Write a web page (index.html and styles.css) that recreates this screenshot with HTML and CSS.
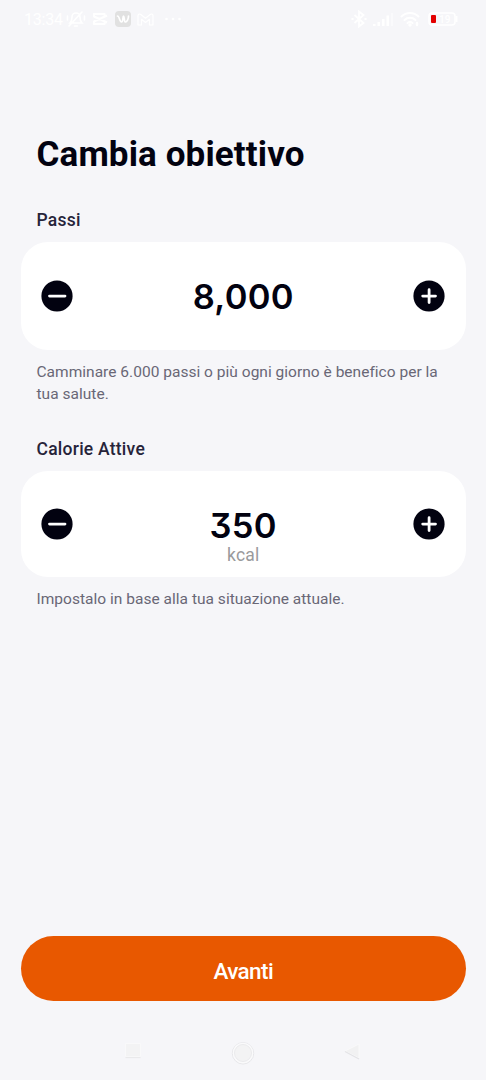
FILE: index.html
```html
<!DOCTYPE html>
<html lang="it">
<head>
<meta charset="utf-8">
<title>Cambia obiettivo</title>
<link rel="stylesheet" href="styles.css">
</head>
<body>
<div class="screen">
  <header class="status">
    <div class="status-left">
      <span class="clock">13:34</span>
      <svg class="bell" width="20" height="18" viewBox="0 0 20 18" fill="none" stroke="#fff" stroke-width="1.600" stroke-linecap="round"><path d="M4 13h12c-1.500-1.500-2-3-2-6a4 4 0 0 0-8 0c0 3-.5 4.500-2 6zM8.500 16h3M3 16 16 2M1.500 6v4M18.500 6v4"/></svg>
      <svg class="cut" width="16" height="14" viewBox="0 0 16 14" fill="none" stroke="#fff" stroke-width="2.200" stroke-linejoin="round"><path d="M15 3.500 2 9.500V12h10.500v-1.500M15 10.500 2 4.500V2h10.500v1.500"/></svg>
      <svg class="w-app" width="16" height="16" viewBox="0 0 16 16"><rect width="16" height="16" rx="4" fill="#e1e1e1"/><path d="M2.500 5c2 0 2 6 4 6s1-6 2-6 .5 6 2 6 3-3 3-6" fill="none" stroke="#fff" stroke-width="1.700" stroke-linecap="round"/></svg>
      <svg class="mail" width="17" height="13" viewBox="0 0 17 13" fill="none" stroke="#fff" stroke-width="1.200" stroke-linejoin="round"><path d="M1 12V2.500C1 .8 2.800.7 3.800 1.500l4.700 3.700 4.700-3.700c1-.8 2.800-.7 2.800 1V12h-3.500V6.300l-4 3.200-4-3.200V12z"/></svg>
      <svg width="18" height="4" viewBox="0 0 18 4" fill="#fff"><circle cx="2.500" cy="2" r="1.300"/><circle cx="9" cy="2" r="1.300"/><circle cx="15.500" cy="2" r="1.300"/></svg>
    </div>
    <div class="status-right">
      <svg width="16" height="18" viewBox="0 0 16 18" fill="none" stroke="#fff" stroke-width="1.800"><path d="m3.500 5 9 8L8 16.500v-15L12.500 5l-9 8"/><path d="M.5 9h2M13.500 9h2"/></svg>
      <svg class="signal" width="20" height="15" viewBox="0 0 20 15" fill="#fff"><path d="M0 12h2.500v2H0zM4.500 10H7v4H4.500zM9 7h2.500v7H9zM13.500 3.500H16V14h-2.500z"/><path d="M18 1h2v13h-2z" opacity=".45"/></svg>
      <svg class="wifi" width="21" height="16" viewBox="0 0 21 16" fill="none" stroke="#fff" stroke-width="2" stroke-linecap="round"><path d="M1.500 5.500a12 12 0 0 1 17 0M4.500 9a8 8 0 0 1 11 0M7.500 12a4 4 0 0 1 5 0"/><circle cx="10" cy="14" r=".7" fill="#fff"/><path d="M17 12v2" stroke-width="2.500"/></svg>
      <svg width="31" height="14" viewBox="0 0 31 14"><rect x="1" y="1" width="26" height="12" rx="3" fill="none" stroke="#fff" stroke-width="1.500"/><rect x="3" y="3" width="5" height="8" rx="1" fill="#e30000"/><path d="M28.500 4v6" stroke="#fff" stroke-width="2"/><text class="battery-text" x="11" y="11">19</text></svg>
    </div>
  </header>

  <main class="content">
    <h1 class="title">Cambia obiettivo</h1>

    <h2 class="label">Passi</h2>
    <section class="card card-steps">
      <button class="round" aria-label="Diminuisci"><svg width="32" height="32" viewBox="0 0 32 32"><circle cx="16" cy="16" r="15.600"/><path d="M8.500 16.100h15.500"/></svg></button>
      <div class="value"><span class="number steps">8,000</span></div>
      <button class="round" aria-label="Aumenta"><svg width="32" height="32" viewBox="0 0 32 32"><circle cx="16" cy="16" r="15.600"/><path d="M9.700 16.100h12.800M16.100 9.700v12.800"/></svg></button>
    </section>
    <p class="hint hint-steps">Camminare 6.000 passi o più ogni giorno è benefico per la<br>tua salute.</p>

    <h2 class="label label-calories">Calorie Attive</h2>
    <section class="card card-calories">
      <button class="round" aria-label="Diminuisci"><svg width="32" height="32" viewBox="0 0 32 32"><circle cx="16" cy="16" r="15.600"/><path d="M8.500 16.100h15.500"/></svg></button>
      <div class="value value-calories"><span class="number">350</span><span class="unit">kcal</span></div>
      <button class="round" aria-label="Aumenta"><svg width="32" height="32" viewBox="0 0 32 32"><circle cx="16" cy="16" r="15.600"/><path d="M9.700 16.100h12.800M16.100 9.700v12.800"/></svg></button>
    </section>
    <p class="hint hint-calories">Impostalo in base alla tua situazione attuale.</p>
  </main>

  <button class="next">Avanti</button>

  <nav class="nav">
    <svg width="18" height="18" viewBox="0 0 18 18"><path d="M1.500 2.500h15v13h-15z" fill="#f3f3f4" stroke="#f9f9fa"/><path d="M1.500 16.500h15" stroke="#e9e9eb" stroke-width="1.200"/></svg>
    <svg width="24" height="24" viewBox="0 0 24 24" fill="none"><circle cx="12" cy="12.300" r="10.700" stroke="#e7e7ea"/><circle cx="12" cy="12" r="9.500" stroke="#fafafb" stroke-width="1.600"/><circle cx="12" cy="12" r="8.500" fill="#f3f3f4" stroke="#e9e9eb" stroke-width=".9"/></svg>
    <svg width="18" height="20" viewBox="0 0 18 20"><path d="M16 3v14L2 10z" fill="#f1f1f2" stroke="#f9f9fa"/><path d="m2 10.500 14 7.500" stroke="#e3e3e6" stroke-width="1.300"/></svg>
  </nav>
</div>
</body>
</html>
```
FILE: styles.css
```css
* { box-sizing: border-box; }
body { margin: 0; background: #f6f6f9; font-family: Roboto, "Liberation Sans", sans-serif; }
button { border: 0; padding: 0; font-family: inherit; }
.screen { width: 486px; height: 1080px; display: flex; flex-direction: column; background: #f6f6f9; }

.status { height: 40px; padding: 0 27px 2px 24px; display: flex; justify-content: space-between; }
.status-left, .status-right { display: flex; align-items: center; }
.clock { width: 42px; padding-top: 2px; color: #fff; font-size: 16px; line-height: 20px; letter-spacing: -.2px; }
.cut { margin-left: 6px; }
.w-app { margin-left: 7px; }
.mail { margin: 0 10px 0 6px; }
.signal { margin-left: 6px; }
.wifi { margin: 0 7px 0 7px; }
.battery-text { fill: #fff; font: 500 10px Roboto, sans-serif; }

.content { flex: 1; padding: 92px 20.500px 0 21px; }
.title { margin: 0 0 0 15.500px; font-size: 35px; line-height: 46px; font-weight: 700; letter-spacing: .13px; color: #020210; }
.label { margin: 30px 0 0 15.500px; font-size: 17.500px; line-height: 24px; font-weight: 500; letter-spacing: .24px; color: #26243a; }
.card { display: flex; justify-content: space-between; align-items: flex-start; background: #fff; border-radius: 27px; padding: 0 20px; }
.card-steps { height: 108px; margin-top: 10px; padding-top: 38px; }
.card-calories { height: 106.500px; margin-top: 9.500px; padding-top: 37.500px; }
.round { width: 32px; height: 32px; background: none; }
.round svg { display: block; fill: #020210; stroke: none; }
.round path { stroke: #fff; stroke-width: 2.800; stroke-linecap: round; }
.value { display: flex; flex-direction: column; align-items: center; }
.value-calories { padding-top: 1px; }
.number { font-family: Inter, sans-serif; font-feature-settings: "cv09" 1; font-size: 34.500px; line-height: 33px; font-weight: 600; letter-spacing: .3px; color: #020210; }
.unit { font-size: 17.500px; line-height: 26px; letter-spacing: .2px; color: #9a9a9c; }
.hint { margin: 11px 0 0 15.500px; font-size: 15.500px; line-height: 22px; letter-spacing: .02px; color: #696776; white-space: nowrap; }
.label-calories { margin-top: 32px; }

.next { height: 65px; margin: 0 20.500px 0 21px; border-radius: 33px; padding-top: 4px; background: #e85800; color: #fff; font-size: 22.500px; font-weight: 500; letter-spacing: -.6px; }
.nav { height: 79px; padding: 40px 125px 0 124px; display: flex; justify-content: space-between; align-items: flex-start; }
```
